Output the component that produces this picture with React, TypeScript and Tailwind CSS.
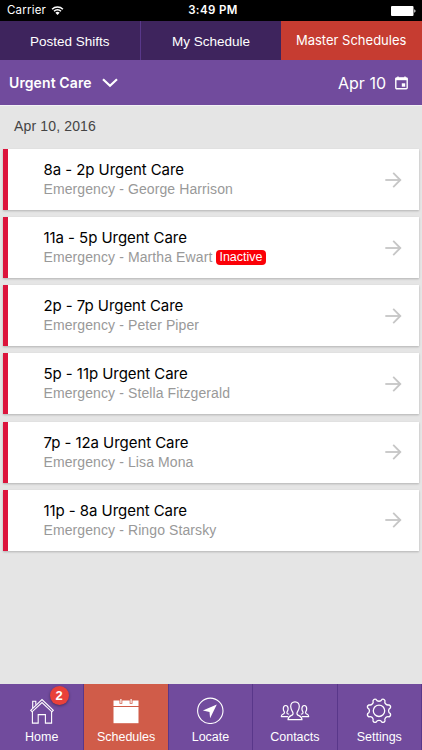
import type { ReactNode } from "react";
import clsx from "clsx";

const shifts = [
  { id: 1, time: "8a - 2p", name: "George Harrison" },
  { id: 2, time: "11a - 5p", name: "Martha Ewart", inactive: true },
  { id: 3, time: "2p - 7p", name: "Peter Piper" },
  { id: 4, time: "5p - 11p", name: "Stella Fitzgerald" },
  { id: 5, time: "7p - 12a", name: "Lisa Mona" },
  { id: 6, time: "11p - 8a", name: "Ringo Starsky" },
];

function StatusBar() {
  return (
    <div className="grid h-[21px] grid-cols-3 items-center bg-black pr-[6px] pl-[7px] text-[11.5px] text-white">
      <div className="flex items-center gap-[5px]">
        <span className="tracking-[0.2px]">Carrier</span>
        <svg className="h-[9px] w-[13px]" viewBox="0 0 12 9" fill="none" stroke="white" strokeWidth="1.5">
          <path d="M0.6 3.3a7.6 7.6 0 0 1 10.8 0" />
          <path d="M2.5 5.3a5 5 0 0 1 7 0" />
          <path d="M6 8.9 3.9 6.8a3 3 0 0 1 4.2 0z" fill="white" stroke="none" />
        </svg>
      </div>
      <span className="pt-px pl-[3px] text-center font-semibold tracking-[0.4px]">3:49 PM</span>
      <svg className="ml-auto h-[10px] w-[25px]" viewBox="0 0 25 10" fill="white">
        <rect width="22.5" height="10" rx="1" />
        <path d="M23.3 3.3c1.6.4 1.6 3 0 3.4z" />
      </svg>
    </div>
  );
}

function ArrowIcon() {
  return (
    <svg className="h-4 w-[17px]" viewBox="0 0 17 16" fill="none" stroke="#c6c6c6" strokeWidth="1.8">
      <path d="M0.3 8h15" />
      <path d="M8.2 0.9 15.3 8l-7.1 7.1" />
    </svg>
  );
}

function HomeIcon() {
  return (
    <svg className="h-7 w-7" viewBox="0 0 28 28" fill="none" stroke="white" strokeWidth="1.1">
      <path d="M2.7 14.3 14 3.6l11.3 10.7-1.4 1.5L14 6.6 4.1 15.8z" />
      <path d="M4.7 12V5.2h3.1v3.6" />
      <path d="M4.4 16v11.1h5.8v-8.5h7.2v8.5h6.2V16" />
    </svg>
  );
}

function CalendarIcon() {
  return (
    <svg className="h-7 w-7" viewBox="0 0 28 28" fill="white">
      <path d="M1.5 4.6h6v3.2h2.8V4.6h7.4v3.2h2.8V4.6h6V10h-25z" />
      <path d="M8.3 3h1.2v4H8.3zM18.5 3h1.2v4h-1.2z" />
      <path d="M1.5 11h25v16.2h-25z" />
    </svg>
  );
}

function LocateIcon() {
  return (
    <svg className="h-7 w-7" viewBox="0 0 28 28">
      <circle cx="14.3" cy="14.8" r="12.7" fill="none" stroke="white" strokeWidth="1.1" />
      <path d="M20.8 8.5 6.9 14.4l6.6 1.5.6 6.3z" fill="white" />
    </svg>
  );
}

function ContactsIcon() {
  return (
    <svg className="h-7 w-[30px]" viewBox="0 0 30 28" fill="none" stroke="white" strokeWidth="1.2" strokeLinejoin="round">
      <path d="M15 5.9c-2.9 0-4.3 1.9-4.3 4.7 0 2.5 1.2 4 2 5.4.5 1.2.5 2.5-.6 3.1-1.9 1-3.9 1-4.1 4.6h14c-.2-3.6-2.200-3.600-4.100-4.600-1.100-.6-1.100-1.900-.6-3.100.8-1.400 2-2.900 2-5.400 0-2.800-1.400-4.700-4.300-4.700z" />
      <path d="M8 20.600H1.300c.1-2.300 1.300-2.300 2.500-2.900.8-.4.8-1.300.4-2.100-.6-.9-.9-1.700-.9-2.900 0-1.900.8-3.200 2.400-3.200s2.400 1.300 2.400 3.200c0 1.200-.3 2-.9 2.900-.4.800-.4 1.700.4 2.100l1.500.6" />
      <path d="M22 20.600h6.700c-.1-2.300-1.300-2.300-2.500-2.900-.8-.4-.8-1.300-.4-2.100.6-.9.9-1.700.9-2.900 0-1.900-.8-3.200-2.400-3.200s-2.400 1.300-2.400 3.200c0 1.200.3 2 .9 2.900.4.800.4 1.700-.4 2.100l-1.500.6" />
    </svg>
  );
}

function SettingsIcon() {
  return (
    <svg className="h-7 w-7" viewBox="-14 -14.8 28 28" fill="none" stroke="white" strokeWidth="1.3" strokeLinejoin="round">
      <path d="M-2.9 -11.4A3.2 3.2 0 0 0 2.9 -11.4A2.5 2.5 0 0 1 6 -10.1A3.2 3.2 0 0 0 10.1 -6A2.5 2.5 0 0 1 11.4 -2.9A3.2 3.2 0 0 0 11.4 2.9A2.5 2.5 0 0 1 10.1 6A3.2 3.2 0 0 0 6 10.1A2.5 2.5 0 0 1 2.9 11.4A3.2 3.2 0 0 0 -2.9 11.4A2.5 2.5 0 0 1 -6 10.1A3.2 3.2 0 0 0 -10.1 6A2.5 2.5 0 0 1 -11.4 2.9A3.2 3.2 0 0 0 -11.4 -2.9A2.5 2.5 0 0 1 -10.1 -6A3.2 3.2 0 0 0 -6 -10.1A2.5 2.5 0 0 1 -2.9 -11.4z" />
      <circle r="5.7" />
    </svg>
  );
}

type NavItemProps = {
  label: string;
  icon: ReactNode;
  active?: boolean;
  badge?: number;
};

function NavItem({ label, icon, active, badge }: NavItemProps) {
  return (
    <button
      className={clsx(
        "flex flex-col items-center border-r border-[#59378a] pt-[12px] text-[12.5px] leading-[15px] text-white",
        active ? "bg-[#d05c49]" : "bg-[#714b9d]"
      )}
    >
      <span className="relative">
        {icon}
        {badge && (
          <span className="absolute -top-[10px] left-[22px] flex size-[19px] items-center justify-center rounded-full bg-[#e9413a] text-[13px] font-bold shadow-[0_1px_3px_rgba(0,0,0,0.4)]">
            {badge}
          </span>
        )}
      </span>
      <span className="mt-[6px]">{label}</span>
    </button>
  );
}

export default function App() {
  return (
    <div className="flex h-[750px] w-[422px] flex-col overflow-hidden bg-[#e5e5e5] font-['Inter',sans-serif]">
      <StatusBar />

      {/* Schedule tabs */}
      <div className="grid h-[39px] shrink-0 grid-cols-3 bg-[#3e245d] text-white">
        <button className="border-r border-[#59388a] pt-[3px] font-['Liberation_Sans',sans-serif] text-[13.5px]">
          Posted Shifts
        </button>
        <button className="pt-[3px] font-['Liberation_Sans',sans-serif] text-[13.5px]">My Schedule</button>
        <button className="bg-[#c63c31] pr-px text-[13px]">Master Schedules</button>
      </div>

      {/* Department and date */}
      <div className="flex h-[45px] shrink-0 items-center justify-between bg-[#714b9d] pr-[14px] pl-[9px] text-white">
        <button className="flex items-center gap-[10px] text-[14px] font-semibold tracking-[0.1px]">
          Urgent Care
          <svg className="h-[10px] w-4" viewBox="0 0 16 10" fill="none" stroke="white" strokeWidth="2.2">
            <path d="M1 1.3l7 6.5 7-6.5" />
          </svg>
        </button>
        <button className="flex items-center gap-[9px] text-[16px]">
          Apr 10
          <svg className="h-[14px] w-[13px]" viewBox="0 0 13 14" fill="none" stroke="white">
            <rect x="0.8" y="2" width="11.4" height="10.8" rx="1" strokeWidth="1.4" />
            <path d="M0.5 3h12" strokeWidth="2.4" />
            <path d="M3 0.5v2M10 0.5v2" strokeWidth="1.4" />
            <rect x="6.8" y="7.3" width="3.4" height="3.4" fill="white" stroke="none" />
          </svg>
        </button>
      </div>

      <main className="flex-1 border-t border-[#f3f1f5]">
        <h2 className="h-[43px] pt-[10px] pl-[14px] font-['Liberation_Sans',sans-serif] text-[14px] leading-5 tracking-[0.15px] text-[#444]">
          Apr 10, 2016
        </h2>
        <div className="flex flex-col gap-[7.15px] px-[3px]">
          {shifts.map((shift) => (
            <div
              key={shift.id}
              className="flex h-[61px] items-center justify-between border-l-[5px] border-[#dc143c] bg-white pr-[17px] pl-[35.5px] shadow-[0_1px_2px_rgba(0,0,0,0.22)]"
            >
              <div>
                <p className="text-[15px] leading-5 tracking-[-0.06px] text-black">{shift.time} Urgent Care</p>
                <p className="flex items-center font-['Liberation_Sans',sans-serif] text-[14px] leading-[19px] tracking-[0.1px] text-[#999]">
                  Emergency - {shift.name}
                  {shift.inactive && (
                    <span className="ml-1 h-[15px] rounded bg-[#fb0007] px-[3px] text-[12.5px] leading-[15px] tracking-normal text-white">
                      Inactive
                    </span>
                  )}
                </p>
              </div>
              <ArrowIcon />
            </div>
          ))}
        </div>
      </main>

      <nav className="grid h-[66px] shrink-0 grid-cols-5 font-['Liberation_Sans',sans-serif]">
        <NavItem label="Home" icon={<HomeIcon />} badge={2} />
        <NavItem label="Schedules" icon={<CalendarIcon />} active />
        <NavItem label="Locate" icon={<LocateIcon />} />
        <NavItem label="Contacts" icon={<ContactsIcon />} />
        <NavItem label="Settings" icon={<SettingsIcon />} />
      </nav>
    </div>
  );
}
